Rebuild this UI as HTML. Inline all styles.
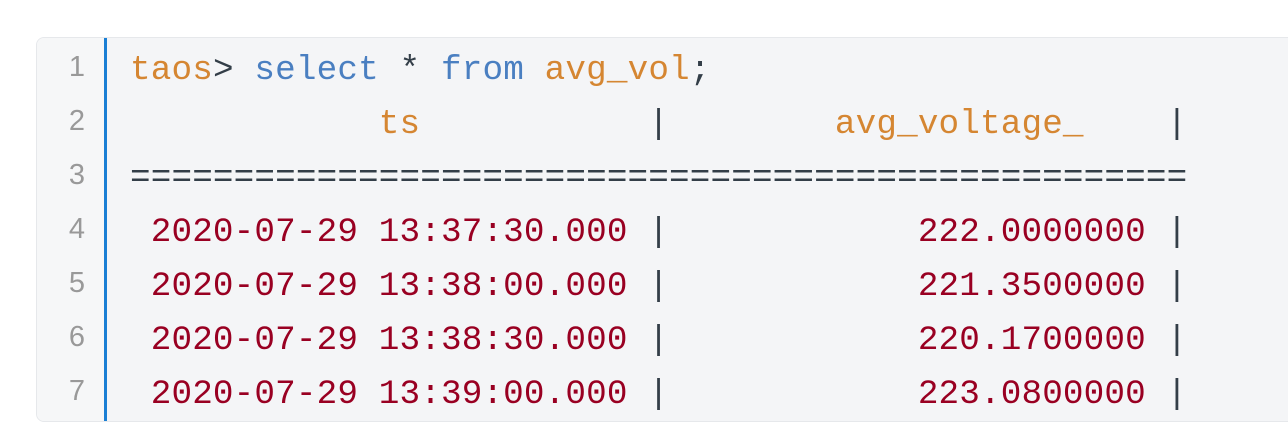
<!DOCTYPE html><html><head><style>
body{margin:0;background:#fff;width:1288px;height:446px;overflow:hidden}
.box{position:absolute;left:36px;top:37px;width:1280px;height:383px;background:#f4f5f7;border:1px solid #e6e8eb;border-radius:8px;overflow:hidden}
.g{position:absolute;left:0;top:0;width:67px;height:100%;background:#f6f7f8;border-right:3px solid #1a7fd4}
.n{position:absolute;left:0;width:48px;text-align:right;font:29px "Liberation Sans",sans-serif;color:#999}
pre{position:absolute;left:93px;top:6px;margin:0;font:34.3px/54px "Liberation Mono",monospace;letter-spacing:0.15px;color:#333e48}
.o{color:#d58632}.b{color:#4a7fc1}.r{color:#990022}
</style></head><body><div class="box"><div class="g"></div>
<div class="n" style="top:13px">1</div><div class="n" style="top:67px">2</div><div class="n" style="top:121px">3</div><div class="n" style="top:175px">4</div><div class="n" style="top:229px">5</div><div class="n" style="top:283px">6</div><div class="n" style="top:337px">7</div>
<pre><span class="o">taos</span>&gt; <span class="b">select</span> * <span class="b">from</span> <span class="o">avg_vol</span>;
            <span class="o">ts</span>           |        <span class="o">avg_voltage_</span>    |
===================================================
 <span class="r">2020-07-29 13:37:30.000</span> |            <span class="r">222.0000000</span> |
 <span class="r">2020-07-29 13:38:00.000</span> |            <span class="r">221.3500000</span> |
 <span class="r">2020-07-29 13:38:30.000</span> |            <span class="r">220.1700000</span> |
 <span class="r">2020-07-29 13:39:00.000</span> |            <span class="r">223.0800000</span> |</pre></div></body></html>
